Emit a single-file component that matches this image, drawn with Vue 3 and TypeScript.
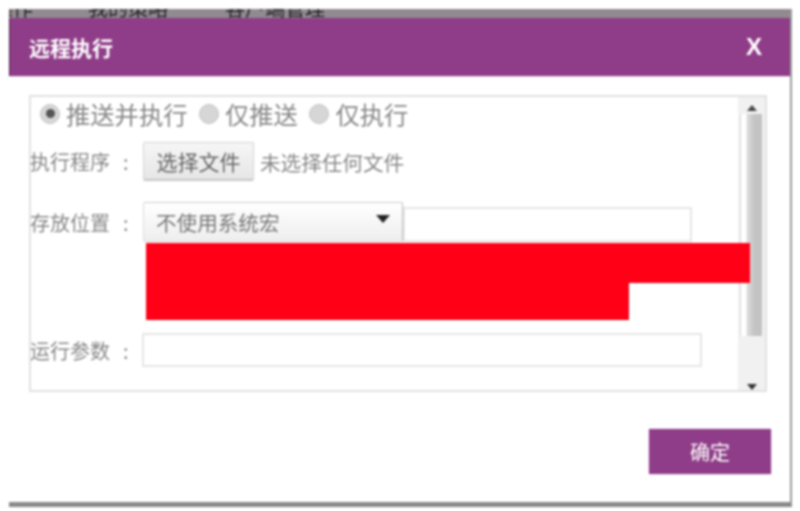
<script setup lang="ts">
const radios = [
  { label: '推送并执行', checked: true },
  { label: '仅推送', checked: false },
  { label: '仅执行', checked: false },
]
</script>

<template>
  <div class="page">
    <div class="window">
      <div class="strip">
        <span class="strip-a">操作</span>
        <span class="strip-b">我的策略</span>
        <span class="strip-c">客户端管理</span>
      </div>
      <header class="title">
        <span class="title-text">远程执行</span>
        <span class="close">X</span>
      </header>
      <div class="body">
        <section class="panel">
          <div class="content">
            <div class="radios">
              <label v-for="r in radios" :key="r.label" class="radio">
                <span class="dot" :class="{ on: r.checked }"></span>
                <span>{{ r.label }}</span>
              </label>
            </div>
            <div class="row file-row">
              <span class="label">执行程序<i class="colon">:</i></span>
              <button class="file-btn">选择文件</button>
              <span class="hint">未选择任何文件</span>
            </div>
            <div class="row pos-row">
              <span class="label">存放位置<i class="colon">:</i></span>
              <div class="select">
                <span>不使用系统宏</span>
                <svg class="caret" width="14" height="8" viewBox="0 0 14 8"><path d="M0 0h14L7 8z" fill="#222" /></svg>
              </div>
              <div class="input short"></div>
            </div>
            <div class="row args-row">
              <span class="label">运行参数<i class="colon">:</i></span>
              <div class="input long"></div>
            </div>
          </div>
          <div class="scrollbar">
            <svg width="10" height="6" viewBox="0 0 10 6" class="up"><path d="M0 6L5 0l5 6z" fill="#444" /></svg>
            <div class="track"><div class="thumb"></div></div>
            <svg width="10" height="6" viewBox="0 0 10 6" class="down"><path d="M0 0h10L5 6z" fill="#333" /></svg>
          </div>
        </section>
        <div class="footer">
          <button class="ok">确定</button>
        </div>
      </div>
      <div class="redact">
        <div class="bar-a"></div>
        <div class="bar-b"></div>
      </div>
    </div>
  </div>
</template>

<style scoped>
.page {
  width: 800px;
  height: 511px;
  padding: 9px 0 0 9px;
  box-sizing: border-box;
  background: #fff;
  overflow: hidden;
  font-family: "Noto Sans CJK SC", "Liberation Sans", sans-serif;
}
.window {
  position: relative;
  width: 783px;
  height: 498px;
  box-sizing: border-box;
  background: #fff;
  border-right: 2px solid #9a9a9a;
  border-bottom: 5px solid #8a8a8a;
  filter: blur(1.1px);
  display: flex;
  flex-direction: column;
}
.strip {
  height: 9px;
  flex: none;
  background: #918a90;
  overflow: hidden;
  font-size: 20px;
  line-height: 14px;
  color: #222;
  display: flex;
}
.strip span {
  margin-top: -8px;
  white-space: nowrap;
}
.strip-a { margin-left: -16px; width: 95px; }
.strip-b { width: 137px; }
.title {
  height: 58px;
  flex: none;
  background: #8f3d88;
  border-left: 1px solid #4d1f4a;
  display: flex;
  align-items: center;
  justify-content: space-between;
  padding: 0 28px 0 19px;
  color: #fff;
  box-shadow: 0 1px 0 #f0d8ee;
}
.title-text {
  font-size: 21px;
  font-weight: 700;
}
.close {
  font-family: "Liberation Sans", sans-serif;
  font-size: 24px;
  font-weight: 700;
}
.body {
  flex: 1;
  display: flex;
  flex-direction: column;
  padding: 19px 19px 0 20px;
}
.panel {
  width: 738px;
  height: 297px;
  box-sizing: border-box;
  border: 2px solid #e2e2e2;
  display: flex;
}
.content {
  flex: 1;
  min-width: 0;
  color: #777;
  font-size: 21px;
}
.radios {
  height: 36px;
  display: flex;
  align-items: center;
  gap: 11.5px;
  padding: 0 0 3px 9px;
  box-sizing: border-box;
  font-size: 24.3px;
  line-height: 32px;
  color: #888;
}
.radio {
  display: flex;
  align-items: center;
  gap: 6px;
}
.dot {
  width: 20px;
  height: 20px;
  box-sizing: border-box;
  border-radius: 50%;
  background: #d6d6d6;
  border: 1px solid #c4c4c4;
  display: flex;
  align-items: center;
  justify-content: center;
}
.dot.on::after {
  content: "";
  width: 9px;
  height: 9px;
  border-radius: 50%;
  background: #555;
}
.row {
  display: flex;
}
.label {
  width: 113px;
  margin-left: -1px;
  flex: none;
  font-size: 20px;
  color: #888;
  white-space: nowrap;
}
.colon {
  font-style: normal;
  margin-left: 13px;
}
.file-row {
  margin-top: 9px;
  height: 39px;
  align-items: center;
}
.file-btn {
  width: 111px;
  height: 39px;
  padding: 0;
  font: inherit;
  font-size: 21px;
  color: #666;
  background: linear-gradient(#f6f6f6, #e6e6e6);
  border: 1px solid #d4d4d4;
  border-bottom: 2px solid #c6c6c6;
  border-radius: 2px;
}
.hint {
  margin-left: 6px;
  color: #888;
  font-size: 20.6px;
}
.pos-row {
  margin-top: 21px;
  height: 40px;
  align-items: flex-end;
}
.pos-row .label {
  align-self: center;
}
.select {
  width: 260px;
  height: 40px;
  flex: none;
  box-sizing: border-box;
  display: flex;
  align-items: center;
  justify-content: space-between;
  padding: 0 12px 0 12px;
  font-size: 20.6px;
  color: #777;
  background: linear-gradient(#fff, #eeeeee);
  border: 1px solid #ddd;
  border-top-color: #ccc;
  border-right-color: #bbb;
  border-radius: 2px;
}
.caret {
  margin-top: -6px;
}
.input {
  box-sizing: border-box;
  background: #fff;
  border: 2px solid #e6e6e6;
}
.short {
  width: 289px;
  height: 35px;
}
.args-row {
  margin-top: 91px;
  height: 34px;
  align-items: center;
}
.long {
  width: 560px;
  height: 34px;
  margin-left: -1px;
}
.scrollbar {
  width: 27px;
  flex: none;
  display: flex;
  flex-direction: column;
  align-items: center;
  background: #f1f1f1;
}
.up {
  margin-top: 8px;
  flex: none;
}
.track {
  flex: 1;
  width: 100%;
  margin-top: 3px;
  display: flex;
}
.thumb {
  width: 100%;
  height: 222px;
  background: linear-gradient(90deg, #fff 0, #d4d4d4 3px, #fff 3px, #fff 8px, #dedede 9px, #c4c4c4 16px, #c2c2c2 24px, #f1f1f1 24px);
}
.down {
  flex: none;
}
.footer {
  display: flex;
  justify-content: flex-end;
  padding-top: 37px;
}
.ok {
  width: 122px;
  height: 45px;
  padding: 0;
  border: none;
  background: #8f3d88;
  color: #fff;
  font: inherit;
  font-size: 20px;
  box-shadow: 0 0 2px #e8c8e6;
}
.redact {
  position: absolute;
  left: 137px;
  top: 234px;
  width: 604px;
}
.bar-a {
  height: 40px;
  background: #ff0016;
}
.bar-b {
  width: 483px;
  height: 37px;
  background: #ff0016;
}
</style>

<style>
html, body {
  margin: 0;
  background: #fff;
}
</style>
